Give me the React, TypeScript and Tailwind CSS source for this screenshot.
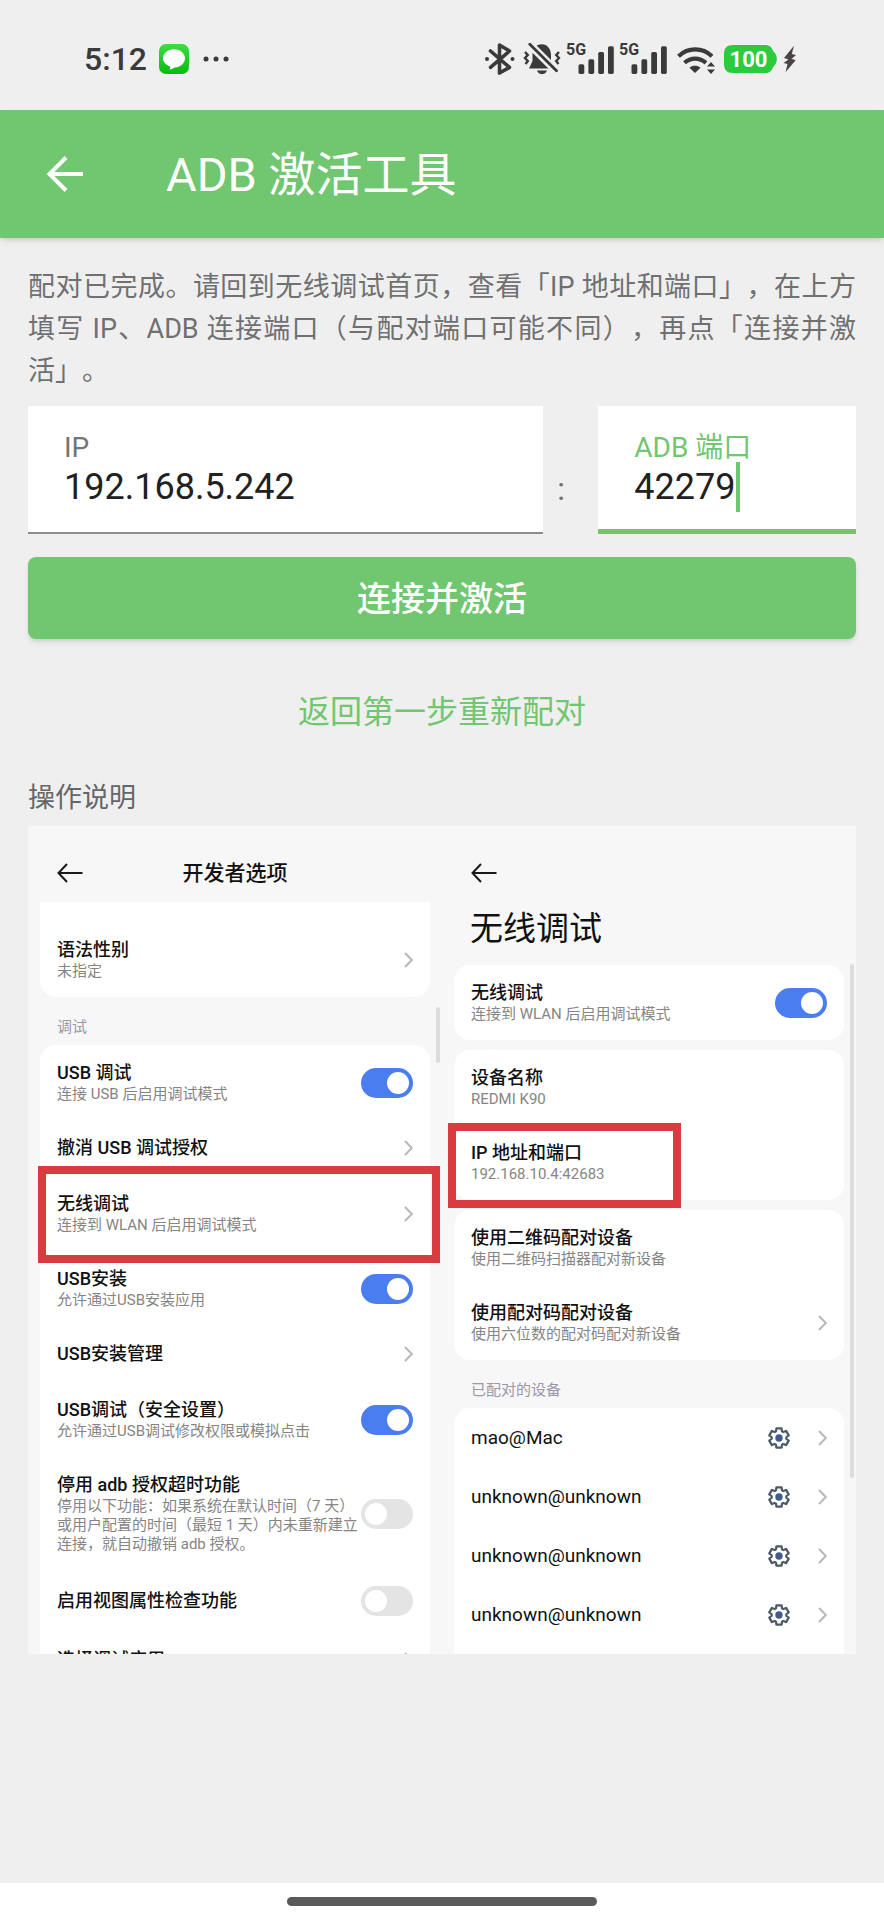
import { useState } from 'react';
import type { ReactNode } from 'react';

type LeftItem = {
  title: string;
  desc?: string;
  kind: 'link' | 'switch';
  on?: boolean;
  highlight?: boolean;
};

const DEBUG_ITEMS: LeftItem[] = [
  { title: 'USB 调试', desc: '连接 USB 后启用调试模式', kind: 'switch', on: true },
  { title: '撤消 USB 调试授权', kind: 'link' },
  { title: '无线调试', desc: '连接到 WLAN 后启用调试模式', kind: 'link', highlight: true },
  { title: 'USB安装', desc: '允许通过USB安装应用', kind: 'switch', on: true },
  { title: 'USB安装管理', kind: 'link' },
  { title: 'USB调试（安全设置）', desc: '允许通过USB调试修改权限或模拟点击', kind: 'switch', on: true },
  {
    title: '停用 adb 授权超时功能',
    desc: '停用以下功能：如果系统在默认时间（7 天）或用户配置的时间（最短 1 天）内未重新建立连接，就自动撤销 adb 授权。',
    kind: 'switch',
  },
  { title: '启用视图属性检查功能', kind: 'switch' },
  { title: '选择调试应用', kind: 'link' },
];

const DEVICES = ['mao@Mac', 'unknown@unknown', 'unknown@unknown', 'unknown@unknown'];

function Signal() {
  return (
    <svg className="w-12 h-10" viewBox="0 -4 48 40" fill="#3a3a3a">
      <text x="0" y="12" fontSize="16" fontWeight="700" fontFamily="Roboto, sans-serif">5G</text>
      <rect x="12.5" y="21.3" width="5.8" height="9.6" rx="1.6" />
      <rect x="22.4" y="16.3" width="5.8" height="14.6" rx="1.6" />
      <rect x="32.2" y="9" width="5.8" height="21.9" rx="1.6" />
      <rect x="42" y="3.2" width="5.8" height="27.7" rx="1.6" />
    </svg>
  );
}

function StatusBar() {
  return (
    <div className="h-[110px] pt-2 pl-[84px] pr-[87px] flex items-center justify-between">
      <div className="flex items-center">
        <span className="text-[32px] leading-10 font-medium text-[#3a3a3a]">5:12</span>
        <svg className="ml-3 w-[30px] h-[30px]" viewBox="0 0 30 30">
          <defs>
            <linearGradient id="msg" x1="0" y1="0" x2="0" y2="1">
              <stop offset="0" stopColor="#3fdc45" />
              <stop offset="1" stopColor="#05bd0c" />
            </linearGradient>
          </defs>
          <rect width="30" height="30" rx="7" fill="url(#msg)" />
          <path d="M15 5.2c6.2 0 11 4 11 9s-4.600 9-10.400 9.200c-1.200 1-3 1.800-5 2 .6-1 .8-2 .6-3C6.800 21 4 18 4 14.200c0-5 4.800-9 11-9z" fill="#fff" />
        </svg>
        <svg className="ml-3.5 w-[26px] h-2" viewBox="0 0 26 8" fill="#3a3a3a">
          <circle cx="3" cy="4" r="2.500" />
          <circle cx="13" cy="4" r="2.500" />
          <circle cx="23" cy="4" r="2.500" />
        </svg>
      </div>

      <div className="flex items-center">
        <svg className="w-[30px] h-[34px]" viewBox="0 0 30 34" fill="none" stroke="#3a3a3a" strokeWidth="3.600" strokeLinejoin="round" strokeLinecap="round">
          <path d="M5.500 9L24.500 25.400 14.500 31V3L24.500 9 5.500 25.400" />
          <circle cx="2" cy="17" r="2" fill="#3a3a3a" stroke="none" />
          <circle cx="27.500" cy="17" r="2" fill="#3a3a3a" stroke="none" />
        </svg>
        <svg className="ml-2 w-[38px] h-8" viewBox="0 0 38 32">
          <path d="M18.700 1.200C13 1.200 9.500 6 9.500 12v6L6 25.500h25.500L28 18v-6c0-6-3.600-10.800-9.300-10.800z" fill="#3a3a3a" />
          <path d="M14 27.600h10c-.8 2.200-2.600 3.600-5 3.600s-4.200-1.400-5-3.600z" fill="#3a3a3a" />
          <path d="M6.800 1.500L33.500 28" stroke="#efefef" strokeWidth="8" />
          <path d="M6.800 1.200L33.500 27.800" stroke="#3a3a3a" strokeWidth="2.800" strokeLinecap="round" />
          <path d="M2 9l2.800 3L2 15l2.800 3L2.500 21M36 9l-2.800 3 2.800 3-2.800 3 2.300 3" fill="none" stroke="#3a3a3a" strokeWidth="2.400" />
        </svg>
        <div className="ml-[5px] flex gap-[5px]">
          <Signal />
          <Signal />
        </div>
        <svg className="ml-[10px] w-[38px] h-8" viewBox="0 0 38 32" fill="none" stroke="#3a3a3a" strokeWidth="4.200">
          <path d="M1.500 13.200C11 4 25.500 4 35 13.200" />
          <path d="M7.500 19.800c6.200-5.600 15-5.600 21.500 0" />
          <path d="M18 30l-5.500-5.300c3.300-2.600 7.700-2.600 11 0z" fill="#3a3a3a" stroke="none" />
          <path d="M34 19l4 4.600h-8zM34 31l4-4.600h-8z" fill="#3a3a3a" stroke="none" />
        </svg>
        <svg className="ml-[9px] w-[53px] h-7" viewBox="0 0 53 28">
          <path d="M9 0h32c4.500 0 6.800 2 8.400 6.600 2.200 1.600 3.400 4.200 3.400 7.400s-1.200 5.800-3.400 7.400C47.800 26 45.500 28 41 28H9c-6 0-9-3-9-9V9c0-6 3-9 9-9z" fill="#2bcb3e" />
          <text x="24.500" y="22" textAnchor="middle" fontSize="22" fontWeight="700" fontFamily="Roboto, sans-serif" fill="#fff">100</text>
        </svg>
        <svg className="ml-1.5 w-[14px] h-7" viewBox="0 0 14 28">
          <path d="M11 .8L1 13l4.500 1.500L.5 18l4 1-2 8.200L12.800 15 8.500 14l4.500-4-4.200-1z" fill="#4a4446" />
        </svg>
      </div>
    </div>
  );
}

function BackArrow() {
  return (
    <svg className="w-[26px] h-5" viewBox="0 0 26 20" fill="none" stroke="#1a1a1a" strokeWidth="2">
      <path d="M10 1L1.500 10l8.500 9M1.500 10H25.500" />
    </svg>
  );
}

function Chevron() {
  return (
    <svg className="w-[9px] h-4 shrink-0" viewBox="0 0 9 16" fill="none" stroke="#b9b9bb" strokeWidth="2">
      <path d="M1 1l6.800 7L1 15" />
    </svg>
  );
}

function Gear() {
  return (
    <svg className="w-[22px] h-[22px]" viewBox="-11 -11 22 22">
      <path
        d="M-3-6.700L-2.600-9.700H2.600L3-6.700 4.300-5.950 7.100-7.100 9.700-2.600 7.300-.75V.75L9.700 2.600 7.100 7.100 4.300 5.950 3 6.700 2.600 9.700H-2.600L-3 6.700-4.300 5.950-7.100 7.100-9.700 2.600-7.300.75V-.75L-9.700-2.600-7.100-7.100-4.300-5.950z"
        fill="none"
        stroke="#4b5866"
        strokeWidth="2.200"
        strokeLinejoin="round"
      />
      <circle r="3.700" fill="#3f5c8c" />
    </svg>
  );
}

function Switch({ on = false }: { on?: boolean }) {
  return (
    <input
      type="checkbox"
      role="switch"
      defaultChecked={on}
      className="appearance-none shrink-0 w-[52px] h-[30px] rounded-full bg-[#e4e4e4] p-1 flex before:w-[22px] before:h-[22px] before:rounded-full before:bg-white checked:bg-[#4a7df0] checked:justify-end"
    />
  );
}

function ItemText({ title, desc }: { title: string; desc?: string }) {
  return (
    <span className="block min-w-0 text-left">
      <span className="block text-lg leading-6 font-medium text-[#111]">{title}</span>
      {desc && <span className="block text-[15px] leading-[19px] text-[#858585]">{desc}</span>}
    </span>
  );
}

const ROW = 'relative w-full px-[17px] py-4 flex items-center justify-between';

function Item({ title, desc, kind, on, highlight }: LeftItem) {
  if (kind === 'switch') {
    return (
      <label className={ROW}>
        <ItemText title={title} desc={desc} />
        <Switch on={on} />
      </label>
    );
  }
  return (
    <button className={ROW}>
      <ItemText title={title} desc={desc} />
      <Chevron />
      {highlight && <span className="absolute z-10 -top-2.5 -bottom-3 -left-0.5 -right-2.5 border-8 border-[#da3b3f]" />}
    </button>
  );
}

function SectionLabel({ children }: { children: ReactNode }) {
  return <h3 className="pt-5 pb-2 px-[17px] text-[15px] leading-5 text-[#9a98a8]">{children}</h3>;
}

function DeveloperOptions() {
  return (
    <section className="relative flex-1 min-w-0 px-3">
      <div className="h-[76px] pt-[17px] px-[17px] grid grid-cols-[1fr_auto_1fr] items-center">
        <button aria-label="返回" className="justify-self-start">
          <BackArrow />
        </button>
        <h2 className="text-[21px] leading-7 font-medium text-[#111]">开发者选项</h2>
      </div>
      <div className="bg-white rounded-b-2xl pt-5">
        <Item title="语法性别" desc="未指定" kind="link" />
      </div>
      <SectionLabel>调试</SectionLabel>
      <div className="bg-white rounded-t-2xl">
        {DEBUG_ITEMS.map((item) => (
          <Item key={item.title} {...item} />
        ))}
      </div>
      {/* Scroll thumb */}
      <span className="absolute right-0.5 top-[181px] w-1 h-14 rounded-full bg-[#dcdcdc]" />
    </section>
  );
}

function WirelessDebugging() {
  return (
    <section className="relative flex-1 min-w-0 px-3">
      <div className="h-[76px] pt-[17px] px-[17px] flex items-center">
        <button aria-label="返回">
          <BackArrow />
        </button>
      </div>
      <h2 className="px-4 pb-[9px] text-[33px] leading-[54px] text-[#111]">无线调试</h2>
      <div className="flex flex-col gap-2.5">
        <div className="bg-white rounded-2xl">
          <Item title="无线调试" desc="连接到 WLAN 后启用调试模式" kind="switch" on />
        </div>
        <div className="bg-white rounded-2xl">
          <div className={ROW}>
            <ItemText title="设备名称" desc="REDMI K90" />
          </div>
          <div className={ROW}>
            <ItemText title="IP 地址和端口" desc="192.168.10.4:42683" />
            <span className="absolute z-10 -top-0.5 -bottom-2 -left-1.5 w-[233px] border-8 border-[#da3b3f]" />
          </div>
        </div>
        <div className="bg-white rounded-2xl">
          <div className={ROW}>
            <ItemText title="使用二维码配对设备" desc="使用二维码扫描器配对新设备" />
          </div>
          <Item title="使用配对码配对设备" desc="使用六位数的配对码配对新设备" kind="link" />
        </div>
      </div>
      <SectionLabel>已配对的设备</SectionLabel>
      <ul className="bg-white rounded-t-2xl pb-10">
        {DEVICES.map((name, i) => (
          <li key={i}>
            <button className="w-full px-[17px] py-4 flex items-center">
              <span className="flex-1 text-left text-[19px] leading-[27px] text-[#111]">{name}</span>
              <span className="mr-7">
                <Gear />
              </span>
              <Chevron />
            </button>
          </li>
        ))}
      </ul>
      <span className="absolute right-0.5 top-[138px] w-1 h-[514px] rounded-full bg-[#dcdcdc]" />
    </section>
  );
}

function App() {
  const [ip, setIp] = useState('192.168.5.242');
  const [port, setPort] = useState('42279');

  return (
    <div className="min-h-screen flex flex-col bg-[#efefef] font-['Roboto','Noto_Sans_CJK_SC',sans-serif] [text-spacing-trim:space-all]" lang="zh-CN">
      <StatusBar />

      <header className="h-32 pl-[46px] flex items-center bg-[#71c670] text-white shadow-md">
        <button aria-label="返回">
          <svg className="w-[38px] h-9" viewBox="0 0 38 36" fill="none" stroke="currentColor" strokeWidth="4">
            <path d="M20 1.500L3.500 18 20 34.500M3 18h34" />
          </svg>
        </button>
        <h1 className="ml-[82px] pt-0.5 text-[47px] leading-[60px]">ADB 激活工具</h1>
      </header>

      <main className="px-7 pt-7 pb-8">
        <p className="text-[27px] leading-[42px] text-[#707070] text-justify">
          配对已完成。请回到无线调试首页，查看「IP 地址和端口」，在上方填写 IP、ADB 连接端口（与配对端口可能不同），再点「连接并激活」。
        </p>

        <div className="mt-3.5 grid grid-cols-[2fr_55px_1fr]">
          <label className="min-w-0 h-32 pt-7 px-9 bg-white border-b-2 border-[#8c8c8c]">
            <span className="block text-[28px] leading-7 text-[#757575]">IP</span>
            <input
              className="block w-full text-[36px] leading-[50px] text-[#212121] outline-none"
              value={ip}
              onChange={(e) => setIp(e.target.value)}
            />
          </label>
          <span className="pl-3.5 pt-[61px] text-[32px] leading-[44px] text-[#707070]">:</span>
          <label className="min-w-0 h-32 pt-7 px-9 bg-white border-b-[5px] border-[#71c670]">
            <span className="block text-[28px] leading-7 text-[#71c670]">ADB 端口</span>
            <span className="flex">
              <input
                className="field-sizing-content text-[36px] leading-[50px] text-[#212121] outline-none"
                value={port}
                onChange={(e) => setPort(e.target.value)}
              />
              <span className="w-1 h-[50px] bg-[#71c670]" />
            </span>
          </label>
        </div>

        <button className="mt-[23px] w-full h-[82px] pt-0.5 rounded-lg bg-[#71c670] text-white text-[34px] leading-[48px] font-medium shadow-md">
          连接并激活
        </button>
        <button className="mt-[49px] block mx-auto text-[32px] leading-[48px] text-[#71c670]">返回第一步重新配对</button>

        <h2 className="mt-[42px] text-[27px] leading-10 text-[#666]">操作说明</h2>
        <div className="mt-2 aspect-square overflow-hidden flex bg-[#f7f7f7]">
          <DeveloperOptions />
          <WirelessDebugging />
        </div>
      </main>

      <div className="mt-auto h-[37px] pt-3.5 bg-white">
        <div className="mx-auto w-[35%] h-[9px] rounded-full bg-[#5a5a5a]" />
      </div>
    </div>
  );
}

export default App;
